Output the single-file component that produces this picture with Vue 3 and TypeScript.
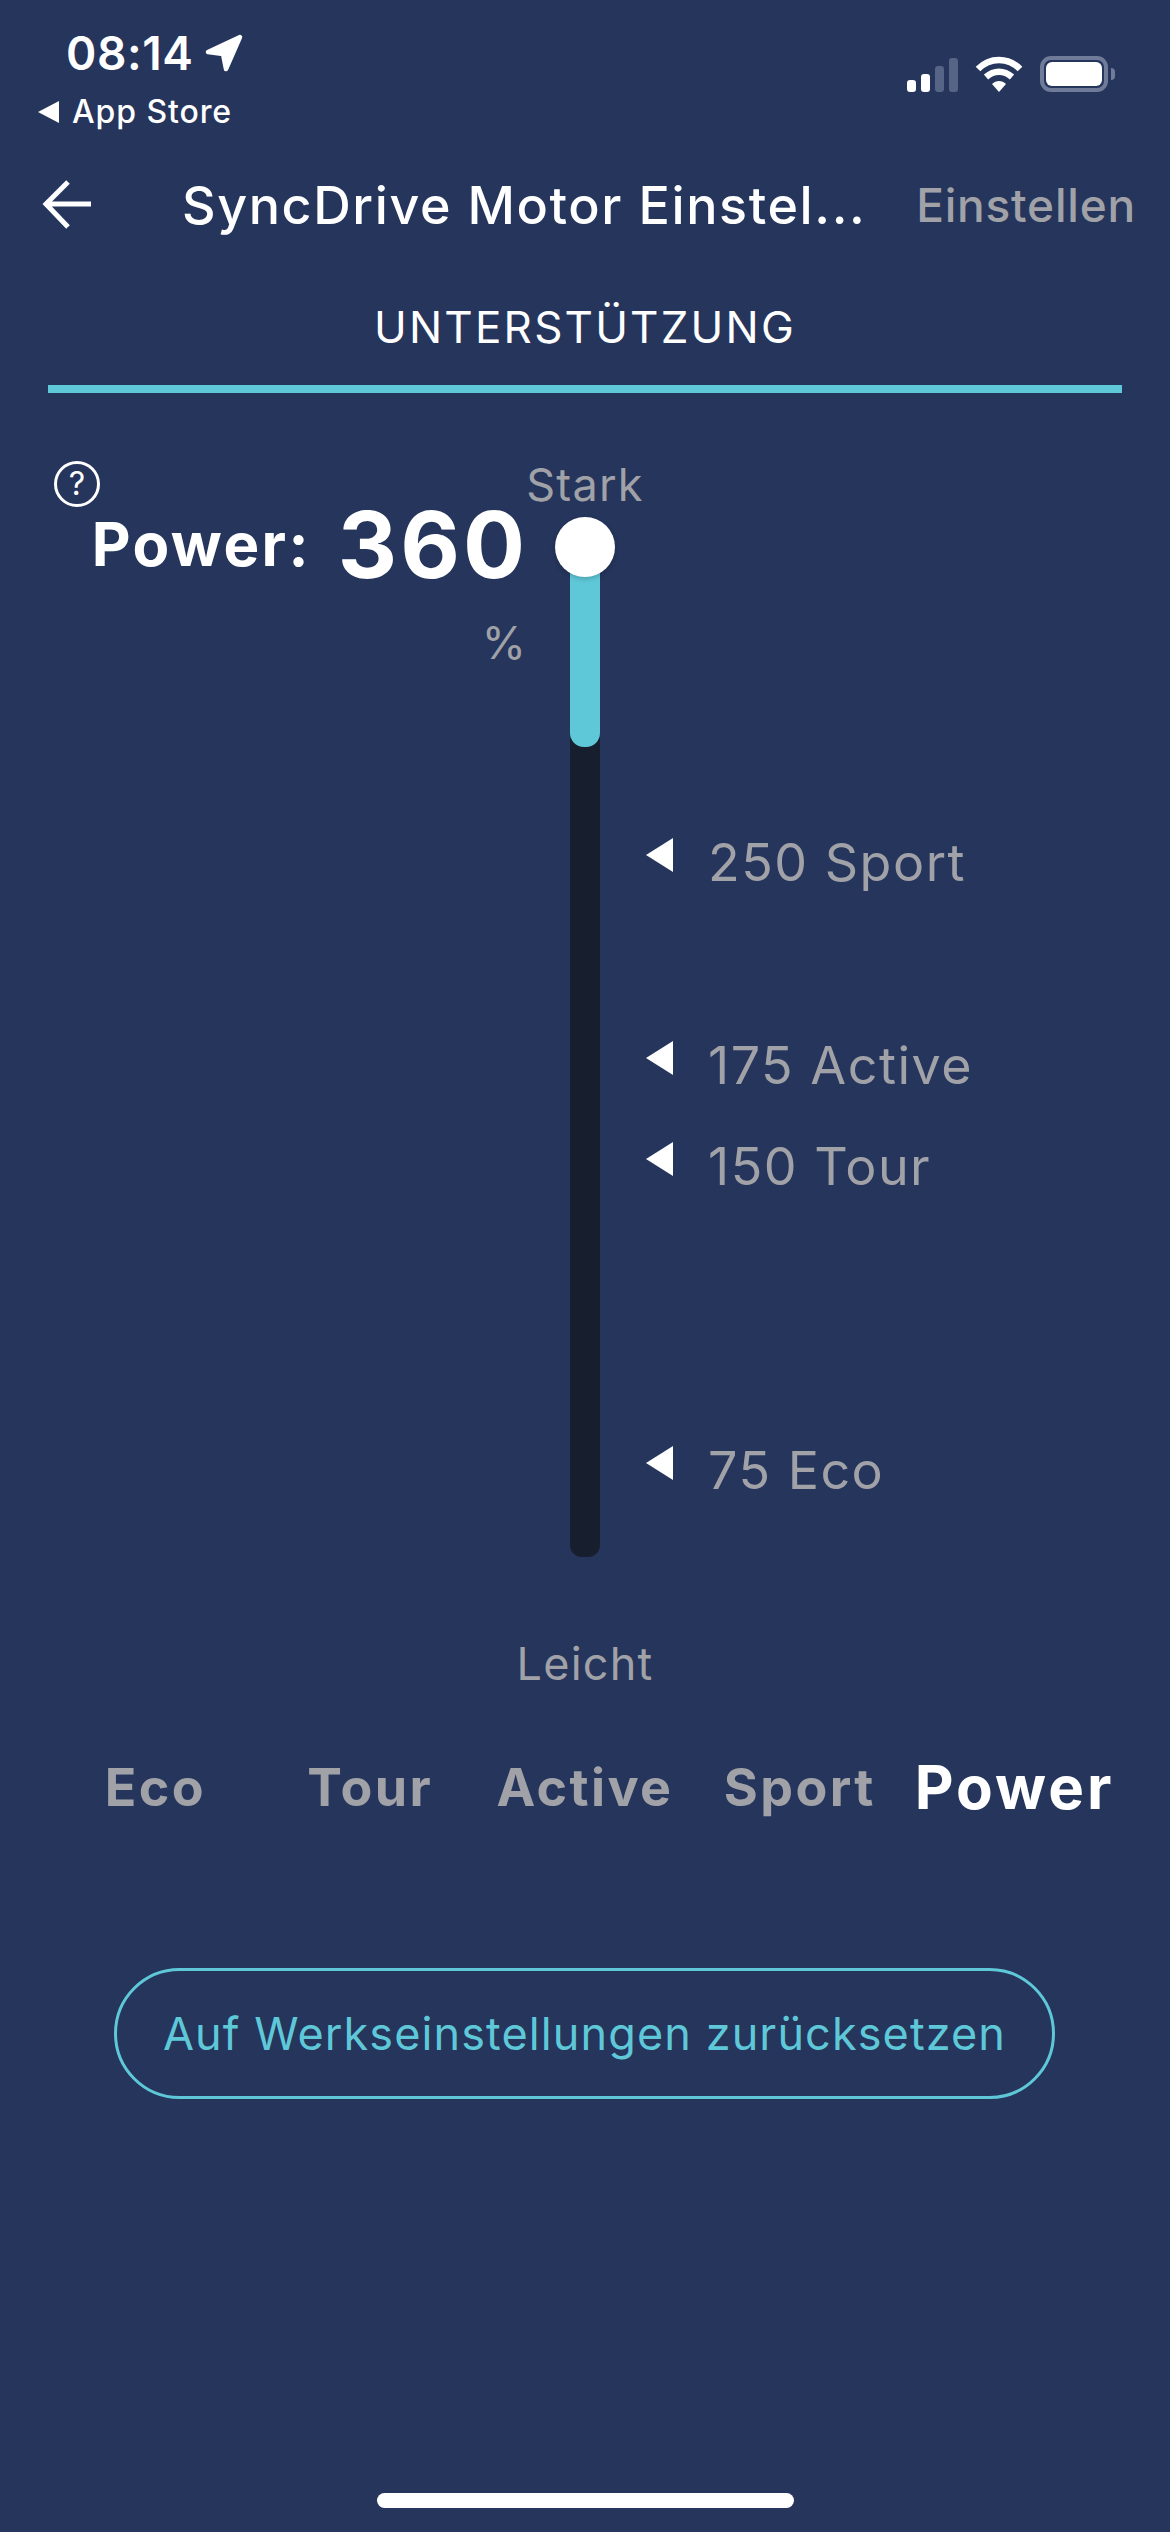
<script setup lang="ts">
import { ref } from 'vue'

// y = distance of the marker from the top of the slider section
const markers = ref([
  { label: '250 Sport', y: 444 },
  { label: '175 Active', y: 647 },
  { label: '150 Tour', y: 748 },
  { label: '75 Eco', y: 1052 }
])

const modes = ref(['Eco', 'Tour', 'Active', 'Sport', 'Power'])
const activeMode = ref('Power')
const signalBars = [12, 18, 26, 34]
</script>

<template>
  <div class="screen">
    <header class="status">
      <div class="status-left">
        <div class="clock">
          <span class="time">08:14</span>
          <svg class="location" width="38" height="38" viewBox="0 0 38 38">
            <path d="M35 3 L3 18 L18 20 L21 35 Z" fill="#fff" stroke="#fff" stroke-width="4.5" stroke-linejoin="round" />
          </svg>
        </div>
        <div class="back-app">
          <svg width="21" height="22" viewBox="0 0 21 22"><path d="M21 0 V22 L0 11 Z" fill="#fff" /></svg>
          <span>App Store</span>
        </div>
      </div>
      <div class="status-right">
        <div class="signal">
          <span
            v-for="(h, i) in signalBars"
            :key="h"
            class="bar"
            :class="{ dim: i > 1 }"
            :style="{ height: h + 'px' }"
          ></span>
        </div>
        <svg class="wifi" width="48" height="36" viewBox="0 0 48 36">
          <path d="M3 13 C15 1 33 1 45 13" fill="none" stroke="#fff" stroke-width="6.5" />
          <path d="M11 21 C19 14 29 14 37 21" fill="none" stroke="#fff" stroke-width="6.5" />
          <path d="M17 28 C21 24 27 24 31 28 L24 36 Z" fill="#fff" />
        </svg>
        <div class="battery"><span class="charge"></span></div>
        <span class="battery-nub"></span>
      </div>
    </header>

    <nav class="nav">
      <svg class="back" width="50" height="50" viewBox="0 0 50 50">
        <path d="M49 24 H4 M26 2 L4 24 L26 47" fill="none" stroke="#fff" stroke-width="5" />
      </svg>
      <span class="title">SyncDrive Motor Einstel...</span>
      <span class="action">Einstellen</span>
    </nav>

    <div class="tab">UNTERSTÜTZUNG</div>

    <section class="slider">
      <div class="readout">
        <div class="help">?</div>
        <div class="value-row">
          <span class="value-label">Power:</span>
          <span class="value">360</span>
        </div>
        <div class="unit">%</div>
      </div>

      <div class="scale">
        <span class="scale-label">Stark</span>
        <div class="track">
          <div class="fill"></div>
          <div class="knob"></div>
        </div>
        <span class="scale-label leicht">Leicht</span>
      </div>

      <div class="markers">
        <div v-for="m in markers" :key="m.label" class="marker" :style="{ top: m.y + 'px' }">
          <svg width="27" height="34" viewBox="0 0 27 34"><path d="M27 0 V34 L0 17 Z" fill="#fff" /></svg>
          <span>{{ m.label }}</span>
        </div>
      </div>
    </section>

    <div class="modes">
      <span v-for="mode in modes" :key="mode" class="mode" :class="{ active: mode === activeMode }">{{ mode }}</span>
    </div>

    <button class="reset">Auf Werkseinstellungen zurücksetzen</button>

    <div class="home"></div>
  </div>
</template>

<style>
html,
body {
  background: #25355c;
}
</style>

<style scoped>
.screen {
  width: 1170px;
  height: 2532px;
  display: flex;
  flex-direction: column;
  background: #25355c;
  color: #fff;
  font-family: Inter, 'Noto Sans', sans-serif;
  overflow: hidden;
}

.status {
  height: 160px;
  display: flex;
  justify-content: space-between;
  box-sizing: border-box;
  padding: 0 55px 0 38px;
}
.clock {
  display: flex;
  align-items: center;
  height: 36px;
  margin-top: 35px;
  margin-left: 28px;
}
.time {
  font-size: 46px;
  font-weight: 600;
  line-height: 36px;
  letter-spacing: 0.6px;
}
.location {
  margin-left: 11px;
}
.back-app {
  display: flex;
  align-items: center;
  gap: 13px;
  margin-top: 21px;
  font-size: 32px;
  font-weight: 500;
  line-height: 40px;
  letter-spacing: 0.9px;
}
.status-right {
  display: flex;
  align-items: flex-end;
  height: 92px;
}
.signal {
  display: flex;
  align-items: flex-end;
  gap: 5px;
  height: 34px;
}
.bar {
  width: 9px;
  border-radius: 3px;
  background: #fff;
}
.bar.dim {
  background: #566486;
}
.wifi {
  margin-left: 17px;
}
.battery {
  width: 68px;
  height: 36px;
  box-sizing: border-box;
  margin-left: 17px;
  padding: 2px;
  border: 4px solid #6f7b98;
  border-radius: 11px;
}
.charge {
  display: block;
  height: 100%;
  border-radius: 6px;
  background: #fff;
}
.battery-nub {
  width: 4px;
  height: 12px;
  margin: 0 0 12px 3px;
  border-radius: 0 4px 4px 0;
  background: #6f7b98;
}

.nav {
  height: 90px;
  display: flex;
  align-items: center;
  padding: 0 34px 0 42px;
}
.back {
  flex-shrink: 0;
}
.title {
  flex: 1;
  margin-left: 90px;
  font-size: 52px;
  font-weight: 500;
  letter-spacing: 1.6px;
  white-space: nowrap;
}
.action {
  font-size: 46px;
  font-weight: 500;
  letter-spacing: 0.8px;
  color: #a1a2a8;
}

.tab {
  margin: 0 48px;
  padding: 51px 0 32px;
  border-bottom: 8px solid #5fc8d8;
  font-size: 44px;
  line-height: 52px;
  font-weight: 400;
  letter-spacing: 2.2px;
  text-align: center;
}

.slider {
  display: grid;
  grid-template-columns: 540px 90px 1fr;
}
.readout {
  padding-top: 68px;
}
.help {
  width: 46px;
  height: 46px;
  box-sizing: border-box;
  margin-left: 54px;
  border: 3px solid #fff;
  border-radius: 50%;
  font-size: 32px;
  font-weight: 400;
  line-height: 40px;
  text-align: center;
}
.value-row {
  display: flex;
  justify-content: flex-end;
  align-items: center;
  height: 90px;
  margin-top: -8px;
  margin-bottom: 3px;
  padding-right: 12px;
}
.value-label {
  font-size: 60px;
  font-weight: 700;
  letter-spacing: 2.4px;
}
.value {
  margin-left: 27px;
  font-size: 92px;
  font-weight: 700;
  letter-spacing: 3px;
}
.unit {
  margin-top: 29px;
  padding-right: 14px;
  font-size: 45px;
  line-height: 50px;
  text-align: right;
  color: #a1a2a8;
}

.scale {
  display: flex;
  flex-direction: column;
  align-items: center;
  padding-top: 67px;
}
.scale-label {
  font-size: 45px;
  line-height: 50px;
  letter-spacing: 1.2px;
  white-space: nowrap;
  color: #a1a2a8;
}
.leicht {
  margin-top: 82px;
}
.track {
  position: relative;
  width: 30px;
  height: 1010px;
  margin-top: 37px;
  border-radius: 0 0 12px 12px;
  background: #171e2e;
}
.fill {
  height: 200px;
  border-radius: 0 0 14px 14px;
  background: #5fc8d8;
}
.knob {
  position: absolute;
  left: -15px;
  top: -30px;
  width: 60px;
  height: 60px;
  border-radius: 50%;
  background: #fff;
  box-shadow: 0 2px 5px rgba(0, 0, 0, 0.2);
}

.markers {
  position: relative;
}
.marker {
  position: absolute;
  left: 16px;
  display: flex;
  align-items: center;
  gap: 35px;
  height: 50px;
  font-size: 52px;
  letter-spacing: 1.5px;
  white-space: nowrap;
  color: #a1a2a8;
}
.marker svg {
  margin-bottom: 14px;
}

.modes {
  display: grid;
  grid-template-columns: repeat(5, 1fr);
  margin: 62px 48px 0;
  height: 70px;
  align-items: center;
  text-align: center;
}
.mode {
  font-size: 52px;
  font-weight: 700;
  letter-spacing: 2.4px;
  color: #a1a2a8;
}
.mode.active {
  font-size: 60px;
  letter-spacing: 3px;
  color: #fff;
}

.reset {
  display: block;
  width: 941px;
  height: 131px;
  margin: 147px 0 0 114px;
  border: 3px solid #5fc8d8;
  border-radius: 66px;
  background: none;
  color: #5fc8d8;
  font-family: inherit;
  font-size: 45px;
  letter-spacing: 1.1px;
}

.home {
  width: 417px;
  height: 15px;
  margin: auto auto 24px;
  border-radius: 8px;
  background: #fff;
}
</style>
